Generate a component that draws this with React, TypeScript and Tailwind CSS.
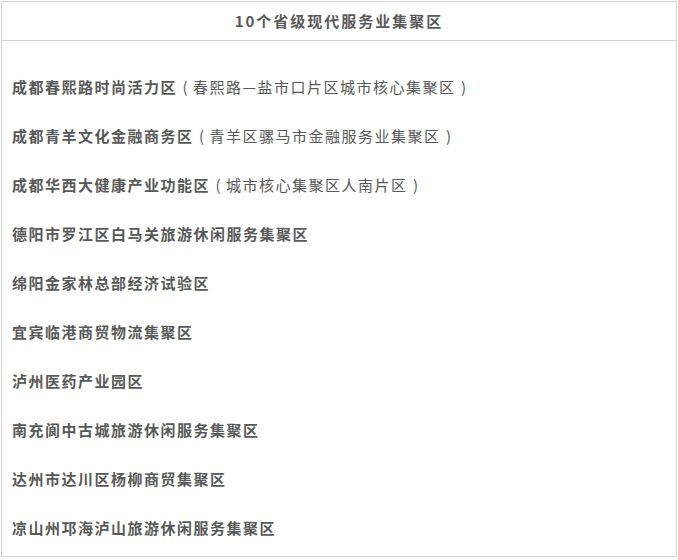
const ZONES: { name: string; note?: string }[] = [
  { name: "成都春熙路时尚活力区", note: "春熙路—盐市口片区城市核心集聚区" },
  { name: "成都青羊文化金融商务区", note: "青羊区骡马市金融服务业集聚区" },
  { name: "成都华西大健康产业功能区", note: "城市核心集聚区人南片区" },
  { name: "德阳市罗江区白马关旅游休闲服务集聚区" },
  { name: "绵阳金家林总部经济试验区" },
  { name: "宜宾临港商贸物流集聚区" },
  { name: "泸州医药产业园区" },
  { name: "南充阆中古城旅游休闲服务集聚区" },
  { name: "达州市达川区杨柳商贸集聚区" },
  { name: "凉山州邛海泸山旅游休闲服务集聚区" },
];

function Paren({ ch }: { ch: string }) {
  return <span className="inline-block w-[16px] text-center tracking-normal">{ch}</span>;
}

export default function App() {
  return (
    <main
      className="h-[560px] w-[678px] bg-white pl-px pt-px text-[15px] text-[#595959]"
      style={{ fontFamily: '"Noto Sans CJK SC", "Noto Sans", sans-serif' }}
    >
      <div className="h-[556px] w-[676px] border border-[#d4d4d4]">
        <header className="flex h-[39px] items-center justify-center border-b border-[#d4d4d4] font-bold tracking-[2px]">
          10个省级现代服务业集聚区
        </header>
        <ul className="pt-[22px] pl-[10px] tracking-[1.5px]">
          {ZONES.map((z) => (
            <li key={z.name} className="flex h-[49px] items-center">
              <span className="font-bold">{z.name}</span>
              {z.note && (
                <span>
                  <Paren ch="(" />
                  {z.note}
                  <Paren ch=")" />
                </span>
              )}
            </li>
          ))}
        </ul>
      </div>
    </main>
  );
}
